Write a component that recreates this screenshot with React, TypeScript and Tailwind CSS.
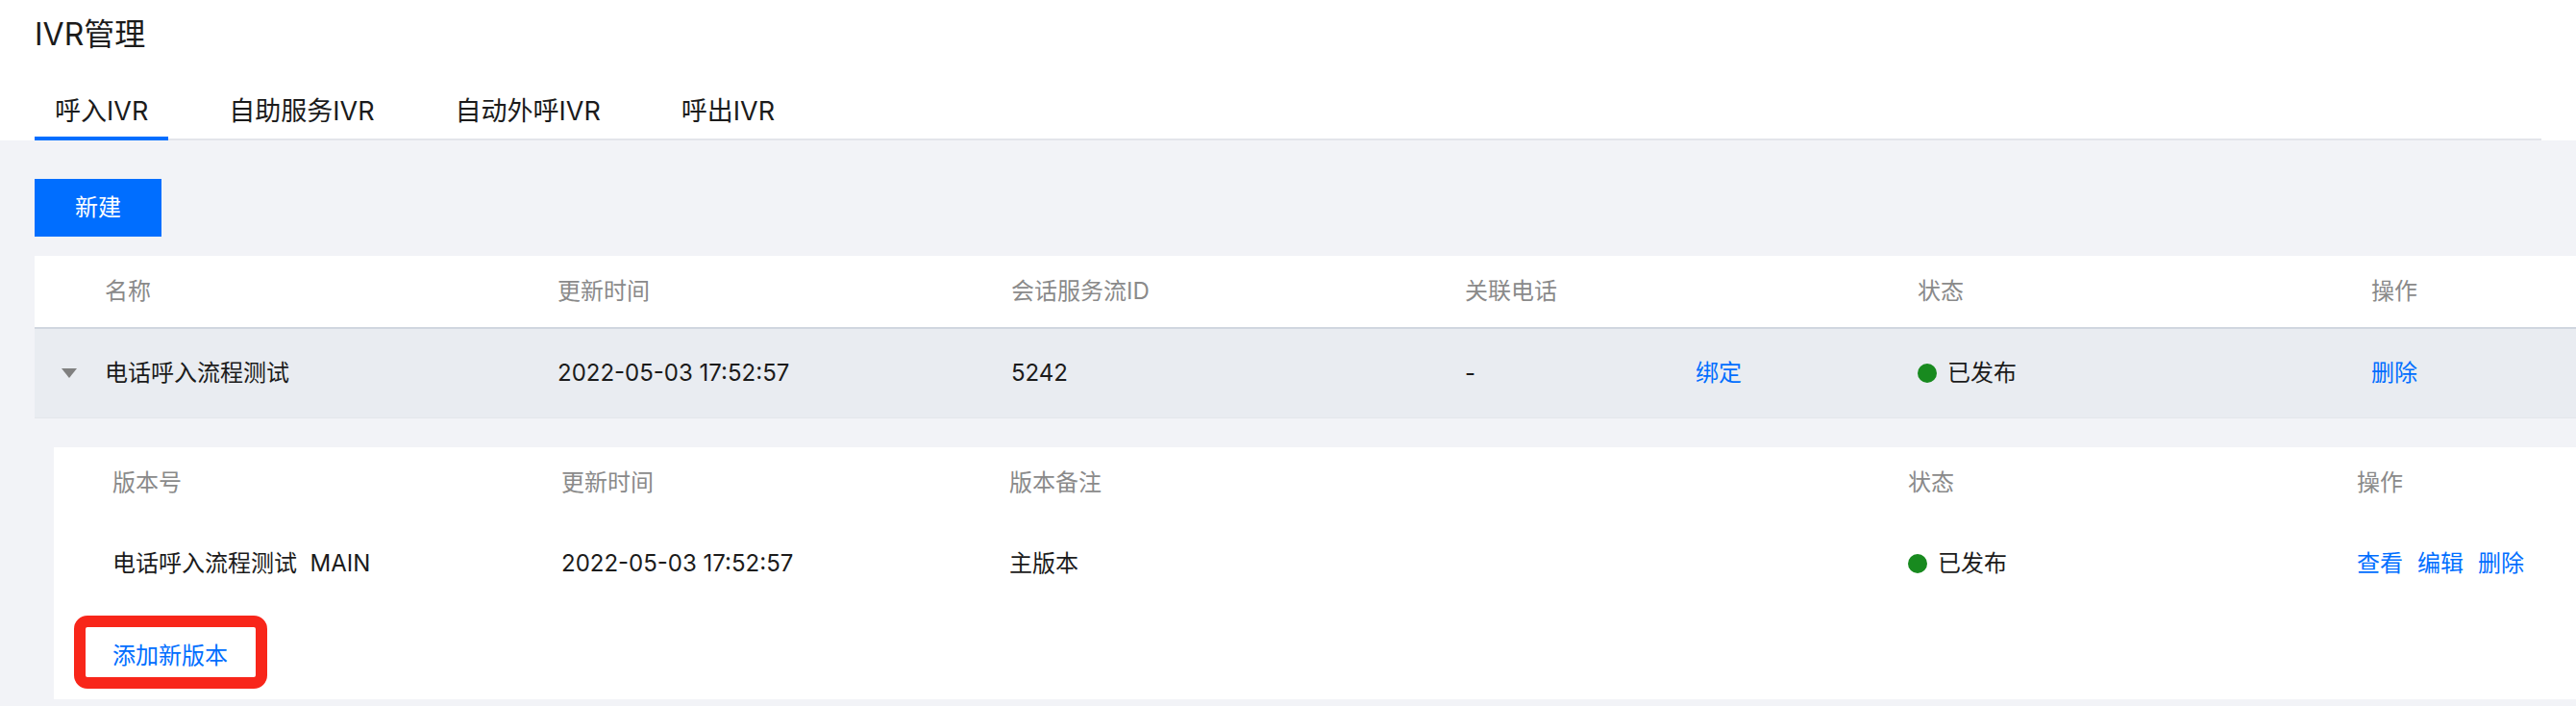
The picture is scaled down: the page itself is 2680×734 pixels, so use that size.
import React from "react";

const Dot = () => <span className="inline-block w-[20px] h-[20px] rounded-full bg-[#188a1f] mr-[11px] shrink-0" />;

export default function App() {
  const tabs = ["呼入IVR", "自助服务IVR", "自动外呼IVR", "呼出IVR"];
  return (
    <div className="w-[2680px] h-[734px] overflow-hidden bg-[#f2f3f7] font-['Inter','Noto_Sans_CJK_SC',sans-serif] text-[#1b1b1b]">
      {/* header */}
      <div className="bg-white px-[36px]">
        <div className="pt-[18px] h-[54px] text-[32px] leading-[36px]">IVR管理</div>
        <div className="mt-[34px] flex gap-[42px] border-b-[2px] border-[#e3e5ea]">
          {tabs.map((t, i) => (
            <div key={t} className="relative h-[56px] px-[21px] flex items-center text-[27px]">
              {t}
              {i === 0 && <span className="absolute left-0 right-0 bottom-[-2px] h-[4px] bg-[#006eff]" />}
            </div>
          ))}
        </div>
      </div>

      {/* content */}
      <div className="pl-[36px] pt-[40px]">
        <button className="w-[132px] h-[60px] bg-[#006eff] text-white text-[24px] flex items-center justify-center">新建</button>

        <div className="mt-[20px] text-[24px]">
          {/* main header */}
          <div className="grid grid-cols-[73px_471px_472px_472px_471px_472px_1fr] h-[76px] bg-white border-b-[2px] border-[#d0d6df] items-center text-[#8a8a8a]">
            <div />
            <div>名称</div>
            <div>更新时间</div>
            <div>会话服务流ID</div>
            <div>关联电话</div>
            <div>状态</div>
            <div>操作</div>
          </div>
          {/* main row */}
          <div className="grid grid-cols-[73px_471px_472px_472px_471px_472px_1fr] h-[93px] bg-[#e9ecf1] border-b border-[#e3e6eb] items-center">
            <div className="pl-[28px] flex items-center">
              <svg width="16" height="10" viewBox="0 0 16 10"><polygon points="0,0 16,0 8,10" fill="#808080" /></svg>
            </div>
            <div>电话呼入流程测试</div>
            <div>2022-05-03 17:52:57</div>
            <div>5242</div>
            <div className="flex">
              <span className="w-[240px]">-</span>
              <span className="text-[#006eff]">绑定</span>
            </div>
            <div className="flex items-center"><Dot />已发布</div>
            <div className="text-[#006eff]">删除</div>
          </div>

          {/* expanded area */}
          <div className="pt-[30px] pl-[20px] pb-[7px]">
            <div className="bg-white">
              <div className="grid grid-cols-[61px_467px_466px_935px_467px_1fr] h-[74px] items-center text-[#8a8a8a]">
                <div />
                <div>版本号</div>
                <div>更新时间</div>
                <div>版本备注</div>
                <div>状态</div>
                <div>操作</div>
              </div>
              <div className="grid grid-cols-[61px_467px_466px_935px_467px_1fr] h-[94px] items-center">
                <div />
                <div>电话呼入流程测试&nbsp;&nbsp;MAIN</div>
                <div>2022-05-03 17:52:57</div>
                <div>主版本</div>
                <div className="flex items-center"><Dot />已发布</div>
                <div className="flex gap-[15px] text-[#006eff]">
                  <span>查看</span>
                  <span>编辑</span>
                  <span>删除</span>
                </div>
              </div>
              <div className="h-[94px] pt-[7px] pl-[21px]">
                <div className="w-[201px] h-[76px] border-[12px] border-[#f8261a] rounded-[14px] flex items-center pl-[28px] pt-[8px] text-[#006eff]">
                  添加新版本
                </div>
              </div>
            </div>
          </div>
        </div>
      </div>
    </div>
  );
}
